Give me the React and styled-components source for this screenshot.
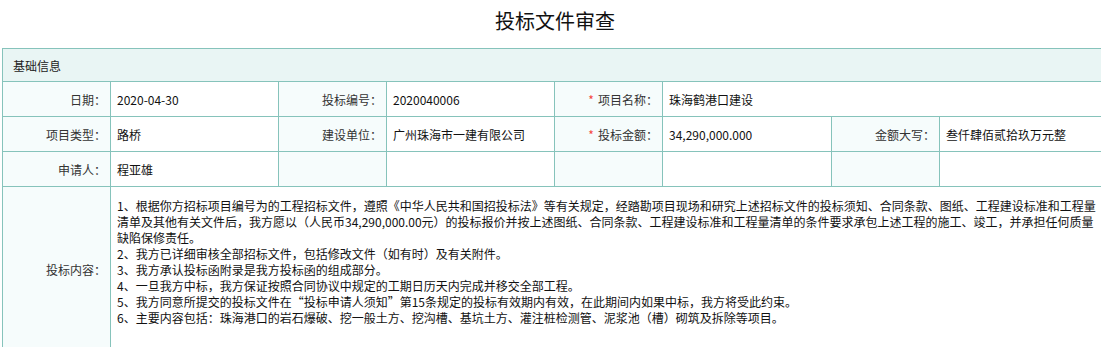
import React from "react";
import styled, { createGlobalStyle } from "styled-components";

const Global = createGlobalStyle`
  html, body { margin: 0; padding: 0; background: #fff; }
  body { font-family: "Noto Sans CJK SC", "Noto Sans", sans-serif; color: #111; }
`;

const BORDER = "#86c3bb";

const Page = styled.div`
  width: 1106px;
  margin-left: 2px;
`;

const Title = styled.h1`
  margin: 0 0 6px;
  height: 42px;
  line-height: 42px;
  font-size: 20px;
  font-weight: 400;
  text-align: center;
  color: #111;
`;

const Table = styled.table`
  width: 1106px;
  border-collapse: collapse;
  table-layout: fixed;
  font-size: 12px;
`;

const Col = styled.col`
  width: ${(p) => p.$w}px;
`;

const SectionCell = styled.td`
  height: 32px;
  padding: 0 10px;
  background: #e9f5f4;
  border: 1px solid ${BORDER};
  font-size: 12px;
  color: #222;
  text-align: left;
`;

const LabelCell = styled.td`
  height: 34px;
  padding: 0 4px 0 6px;
  background: #f6fcfc;
  border: 1px solid ${BORDER};
  color: #333;
  text-align: right;
  white-space: nowrap;
`;

const ValueCell = styled.td`
  height: 34px;
  padding: 0 6px;
  background: #fff;
  border: 1px solid ${BORDER};
  color: #111;
  text-align: left;
  white-space: nowrap;
  overflow: hidden;
`;

const ContentCell = styled.td`
  padding: 11px 6px 26px 6px;
  background: #fff;
  border: 1px solid ${BORDER};
  color: #111;
  line-height: 16px;
  vertical-align: top;
  text-align: left;
`;

const Line = styled.div`
  line-height: 16px;
`;

const Star = styled.span`
  color: #f5473c;
  margin-right: 4px;
`;

const Label = ({ children, required }) => (
  <LabelCell>
    {required && <Star>*</Star>}
    {children}：
  </LabelCell>
);

const lines = [
  "1、根据你方招标项目编号为的工程招标文件，遵照《中华人民共和国招投标法》等有关规定，经踏勘项目现场和研究上述招标文件的投标须知、合同条款、图纸、工程建设标准和工程量清单及其他有关文件后，我方愿以（人民币34,290,000.00元）的投标报价并按上述图纸、合同条款、工程建设标准和工程量清单的条件要求承包上述工程的施工、竣工，并承担任何质量缺陷保修责任。",
  "2、我方已详细审核全部招标文件，包括修改文件（如有时）及有关附件。",
  "3、我方承认投标函附录是我方投标函的组成部分。",
  "4、一旦我方中标，我方保证按照合同协议中规定的工期日历天内完成并移交全部工程。",
  "5、我方同意所提交的投标文件在“投标申请人须知”第15条规定的投标有效期内有效，在此期间内如果中标，我方将受此约束。",
  "6、主要内容包括：珠海港口的岩石爆破、挖一般土方、挖沟槽、基坑土方、灌注桩检测管、泥浆池（槽）砌筑及拆除等项目。",
];

const widths = [108, 168, 108, 168, 108, 169, 108, 169];

export default function App() {
  return (
    <Page>
      <Global />
      <Title>投标文件审查</Title>
      <Table>
        <colgroup>
          {widths.map((w, i) => (
            <Col key={i} $w={w} />
          ))}
        </colgroup>
        <tbody>
          <tr>
            <SectionCell colSpan={8}>基础信息</SectionCell>
          </tr>
          <tr>
            <Label>日期</Label>
            <ValueCell>2020-04-30</ValueCell>
            <Label>投标编号</Label>
            <ValueCell>2020040006</ValueCell>
            <Label required>项目名称</Label>
            <ValueCell colSpan={3}>珠海鹤港口建设</ValueCell>
          </tr>
          <tr>
            <Label>项目类型</Label>
            <ValueCell>路桥</ValueCell>
            <Label>建设单位</Label>
            <ValueCell>广州珠海市一建有限公司</ValueCell>
            <Label required>投标金额</Label>
            <ValueCell>34,290,000.000</ValueCell>
            <Label>金额大写</Label>
            <ValueCell>叁仟肆佰贰拾玖万元整</ValueCell>
          </tr>
          <tr>
            <Label>申请人</Label>
            <ValueCell>程亚雄</ValueCell>
            <LabelCell />
            <ValueCell />
            <LabelCell />
            <ValueCell />
            <LabelCell />
            <ValueCell />
          </tr>
          <tr>
            <Label>投标内容</Label>
            <ContentCell colSpan={7}>
              {lines.map((l, i) => (
                <Line key={i}>{l}</Line>
              ))}
            </ContentCell>
          </tr>
        </tbody>
      </Table>
    </Page>
  );
}
